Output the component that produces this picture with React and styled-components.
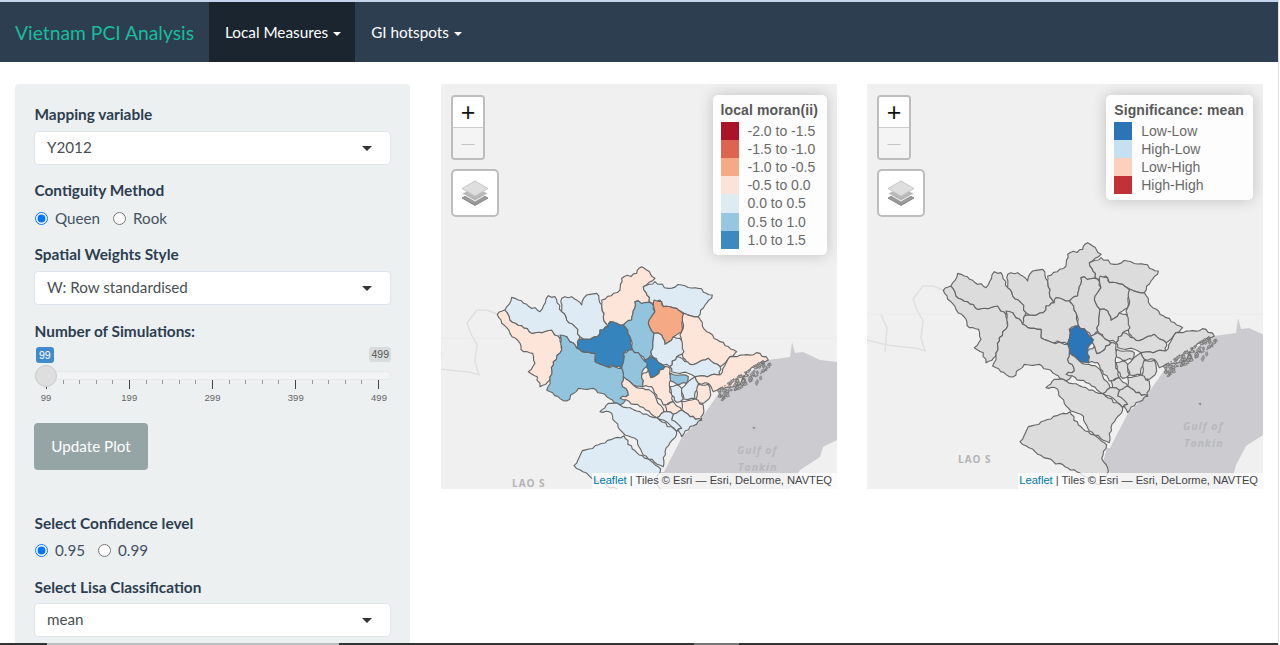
import React from "react";
import styled, { createGlobalStyle } from "styled-components";

const GlobalStyle = createGlobalStyle`
  html, body {
    margin: 0;
    padding: 0;
    background: #fff;
    overflow: hidden;
  }
  body {
    font-family: Lato, "Liberation Sans", sans-serif;
    font-size: 15.2px;
    color: #2c3e50;
  }
`;

const Page = styled.div`
  width: 1278px;
  height: 645px;
  display: flex;
  flex-direction: column;
  overflow: hidden;
  border-right: 1px solid #ddd;
`;

const TopLine = styled.div`
  height: 2px;
  flex: none;
  background: #c5d4ec;
`;

const Navbar = styled.nav`
  height: 60px;
  flex: none;
  display: flex;
  align-items: stretch;
  padding-left: 15px;
  background: #2c3e50;
`;

const Brand = styled.div`
  display: flex;
  align-items: center;
  width: 179px;
  margin-right: 15px;
  font-size: 19.3px;
  white-space: nowrap;
  color: #18bc9c;
`;

const NavItem = styled.div`
  display: flex;
  align-items: center;
  padding: 0 14px 0 16px;
  font-size: 15.3px;
  color: #fff;
  background: ${(p) => (p.$active ? "#1a252f" : "transparent")};
`;

const Caret = styled.span`
  width: 0;
  height: 0;
  margin-left: 5px;
  margin-top: 3px;
  border-top: 4px solid #fff;
  border-left: 4px solid transparent;
  border-right: 4px solid transparent;
`;

const SelectCaret = styled.span`
  width: 0;
  height: 0;
  margin-top: 2px;
  border-top: 5px solid #333;
  border-left: 5px solid transparent;
  border-right: 5px solid transparent;
`;

const Content = styled.div`
  flex: 1;
  min-height: 0;
  display: flex;
  padding-top: 22px;
  overflow: hidden;
`;

const SideCol = styled.div`
  width: 426px;
  flex: none;
  padding: 0 16px 0 15px;
  box-sizing: border-box;
`;

const Well = styled.div`
  background: #ecf0f1;
  border-radius: 4px;
  padding: 19px 19px 30px;
`;

const Label = styled.div`
  font-size: 15.4px;
  font-weight: 700;
  line-height: 22px;
  padding-left: 0.5px;
  margin-bottom: ${(p) => p.$mb ?? 6}px;
  margin-top: ${(p) => p.$mt ?? 0}px;
`;

const SelectBox = styled.div`
  height: 34px;
  box-sizing: border-box;
  display: flex;
  align-items: center;
  justify-content: space-between;
  padding: 0 18px 2px 12px;
  background: #fff;
  border: 1px solid #dce4ec;
  border-radius: 4px;
  color: #4a4f53;
`;

const RadioRow = styled.div`
  display: flex;
  align-items: center;
  height: 22px;
  color: #44525f;
`;

const RadioLabel = styled.label`
  display: flex;
  align-items: center;
  margin-right: 12px;

  input {
    width: 13px;
    height: 13px;
    margin: 0 7px 0 1px;
  }
`;

const Slider = styled.div`
  margin-top: 5px;
  font-family: "Liberation Sans", Arial, sans-serif;
`;

const BadgeRow = styled.div`
  display: flex;
  justify-content: space-between;
  padding-left: 2px;
`;

const Badge = styled.span`
  font-size: 10.5px;
  line-height: 13px;
  padding: ${(p) => (p.$blue ? "2px 3px 1px" : "1px 2px")};
  border-radius: 3px;
  align-self: flex-start;
  color: ${(p) => (p.$blue ? "#fff" : "#555")};
  background: ${(p) => (p.$blue ? "#428bca" : "#d9dcdd")};
`;

const TrackWrap = styled.div`
  position: relative;
  margin-top: 8px;
  height: 9px;
  background: #f1f3f4;
  border: 1px solid #e6e9ea;
  box-sizing: border-box;
  border-radius: 5px;
`;

const Handle = styled.div`
  position: absolute;
  left: 0;
  top: -7px;
  width: 22px;
  height: 22px;
  box-sizing: border-box;
  border-radius: 50%;
  background: #dedede;
  border: 1px solid #c8cacb;
`;

const TickRow = styled.div`
  display: flex;
  justify-content: space-between;
  align-items: flex-start;
  height: 9px;
  padding: 0 12px;
`;

const Tick = styled.span`
  width: 1px;
  height: ${(p) => (p.$major ? 9 : 4)}px;
  background: ${(p) => (p.$major ? "#444" : "#999")};
`;

const TickLabels = styled.div`
  display: flex;
  justify-content: space-between;
  padding: 0 12px;
  margin-top: 3px;
`;

const TickLabel = styled.span`
  width: 0;
  display: flex;
  justify-content: center;
  font-size: 9.5px;
  line-height: 12px;
  color: #666;
`;

const UpdateButton = styled.div`
  width: 114px;
  height: 47px;
  margin-top: 19px;
  padding-bottom: 2px;
  box-sizing: border-box;
  display: flex;
  align-items: center;
  justify-content: center;
  border-radius: 4px;
  background: #95a5a6;
  color: #fff;
`;

const MainCol = styled.div`
  flex: 1;
  display: grid;
  grid-template-columns: 396px 396px;
  column-gap: 30px;
  padding-left: 15px;
  align-items: start;
`;

const MapPanel = styled.div`
  position: relative;
  height: 405px;
  overflow: hidden;
  background: #f0f0f0;
  font-family: "Liberation Sans", Arial, sans-serif;
`;

const MapSvg = styled.svg`
  display: block;
  width: 396px;
  height: 405px;
`;

const ZoomControl = styled.div`
  position: absolute;
  left: 10px;
  top: 11px;
  width: 34px;
  box-sizing: border-box;
  border: 2px solid #bdbdbd;
  border-radius: 4px;
  overflow: hidden;
`;

const ZoomButton = styled.div`
  height: 30px;
  display: flex;
  align-items: center;
  justify-content: center;
  background: ${(p) => (p.$disabled ? "#f4f4f4" : "#fff")};
  color: ${(p) => (p.$disabled ? "#c4c4c4" : "#111")};
  border-bottom: ${(p) => (p.$disabled ? "none" : "1px solid #ccc")};
  font: 400 ${(p) => (p.$disabled ? 13 : 25)}px "Liberation Sans", Arial, sans-serif;
`;

const LayersControl = styled.div`
  position: absolute;
  left: 10px;
  top: 85px;
  width: 48px;
  height: 48px;
  box-sizing: border-box;
  display: flex;
  align-items: center;
  justify-content: center;
  background: #fff;
  border: 2px solid #bdbdbd;
  border-radius: 5px;
`;

const Legend = styled.div`
  position: absolute;
  top: 11px;
  right: 10px;
  padding: 6px 9px 6px 8px;
  border-radius: 5px;
  background: rgba(255, 255, 255, 0.85);
  box-shadow: 0 0 15px rgba(0, 0, 0, 0.2);
  font-size: 14px;
  line-height: 18.2px;
  color: #6a6a6a;
`;

const LegendTitle = styled.div`
  font-weight: 700;
  letter-spacing: 0.12px;
  color: #585858;
  white-space: nowrap;
  margin-bottom: 2.4px;
`;

const LegendRow = styled.div`
  display: flex;
  white-space: nowrap;
`;

const Swatch = styled.i`
  width: 18px;
  height: 18.2px;
  margin-right: 9px;
  background: ${(p) => p.$color};
`;

const Attribution = styled.div`
  position: absolute;
  right: 0;
  bottom: 0;
  height: 16px;
  padding: 0 5px 0 1px;
  background: rgba(255, 255, 255, 0.75);
  font-size: 11.15px;
  line-height: 15px;
  color: #444;
  white-space: nowrap;

  a {
    color: #0078a8;
  }
`;

const TaskbarEdge = styled.div`
  height: 2px;
  flex: none;
  background: linear-gradient(
    to right,
    #333 0 47px,
    #bbb 47px 339px,
    #333 339px 694px,
    #777 694px 739px,
    #333 739px
  );
`;

const LO = "#fde5da";
const LB = "#deebf4";
const MB = "#92c4de";
const DB = "#3684bd";
const OR = "#f6a985";

// points are read from the screenshot at 3x, the svg group scales them back
const regions = [
  { fill: LO, pts: "112,178 135,165 150,195 185,212 215,235 275,225 300,250 305,285 280,320 270,375 240,395 232,365 205,350 225,325 218,295 190,290 175,258 150,235 125,205" },
  { fill: LB, pts: "135,165 155,127 175,135 200,148 240,170 265,122 285,125 305,170 320,195 345,215 360,245 350,280 320,245 300,250 275,225 215,235 185,212 150,195" },
  { fill: LB, pts: "305,130 335,125 365,150 380,120 410,115 425,150 430,185 445,215 420,225 412,245 370,252 360,245 345,215 320,195 305,170" },
  { fill: LO, pts: "425,135 480,105 485,70 530,55 545,35 560,45 585,70 550,95 575,145 525,140 515,195 490,210 470,205 445,215 430,185 425,150" },
  { fill: LB, pts: "550,95 585,80 625,100 665,90 715,100 757,120 735,150 715,185 672,175 650,160 610,155 600,135 575,145" },
  { fill: DB, pts: "355,255 370,252 412,245 420,225 445,215 450,200 470,205 490,210 510,245 518,280 490,295 485,340 455,330 440,335 405,320 405,295 365,290 350,280" },
  { fill: MB, pts: "490,210 515,195 525,140 575,145 585,170 565,205 582,235 575,300 555,315 540,300 518,285 510,245" },
  { fill: OR, pts: "582,135 605,140 610,155 650,160 672,180 665,230 640,245 615,268 605,240 582,235 565,205 585,170" },
  { fill: LO, pts: "672,175 715,185 740,230 780,260 830,290 810,305 780,335 745,310 690,328 660,290 660,240 665,230" },
  { fill: LB, pts: "582,235 605,240 615,268 640,245 660,250 672,290 650,305 630,335 600,325 575,300" },
  { fill: DB, pts: "555,315 575,305 615,335 590,360 572,368 565,345" },
  { fill: MB, mark: true, pts: "490,295 518,285 540,300 562,325 545,360 548,395 520,390 490,365 485,340" },
  { fill: MB, pts: "300,240 320,245 350,280 365,290 405,295 405,320 440,335 485,340 490,365 485,385 505,420 480,450 440,425 400,400 355,400 320,438 260,405 270,375 280,320 305,285" },
  { fill: LO, pts: "485,385 490,365 520,390 548,400 575,410 590,435 612,470 590,488 540,455 480,430 505,420" },
  { fill: LO, pts: "545,360 565,345 572,368 590,360 615,335 630,340 632,375 628,390 640,440 610,450 590,420 575,395 548,395" },
  { fill: LB, pts: "630,335 650,305 690,328 745,310 780,335 780,360 705,365 685,355 660,355 635,350" },
  { fill: LO, pts: "705,365 780,360 810,305 850,300 900,295 925,315 890,330 860,350 840,390 780,400 760,410 745,385 715,385" },
  { fill: MB, pts: "632,355 660,360 685,365 680,385 650,388 632,378" },
  { fill: LB, pts: "630,395 650,390 665,400 670,432 650,442 635,420" },
  { fill: LB, pts: "680,385 705,365 715,385 710,405 705,430 672,432 665,400" },
  { fill: LO, pts: "715,388 745,388 752,420 730,445 705,440 710,405" },
  { fill: LO, pts: "615,450 640,440 665,465 640,478 620,470" },
  { fill: LO, pts: "665,440 705,432 730,450 725,495 690,485 665,465" },
  { fill: LB, pts: "640,478 665,465 690,485 725,495 690,515 665,545 650,510 635,495" },
  { fill: LB, pts: "590,488 612,470 620,470 640,478 635,495 665,520 650,530 610,495" },
  { fill: LB, pts: "420,470 445,445 480,450 540,470 590,488 650,530 645,548 615,590 610,635 550,600 525,550 495,540 465,500 455,475" },
  { fill: LB, pts: "342,632 367,587 387,582 472,547 492,542 517,582 547,602 602,642 587,682 607,722 582,762 512,722 442,692 387,662" },
];

const noise = (a, b) => {
  const s = Math.sin(a * 12.9898 + b * 78.233) * 43758.5453;
  return s - Math.floor(s);
};

// borders are jagged in the picture, so wobble each edge the same way for both neighbours
const roughen = (pts) => {
  const p = pts.split(" ").map((s) => s.split(",").map(Number));
  const out = [];
  p.forEach((a, i) => {
    const b = p[(i + 1) % p.length];
    const rev = a[0] > b[0] || (a[0] === b[0] && a[1] > b[1]);
    const [s, e] = rev ? [b, a] : [a, b];
    const len = Math.hypot(e[0] - s[0], e[1] - s[1]);
    const n = Math.max(1, Math.round(len / 10));
    const seg = [];
    for (let k = 1; k < n; k++) {
      const t = k / n;
      const off = (noise(s[0] + k, s[1] + e[0] * 0.1 + e[1] * 0.01) - 0.5) * 8;
      seg.push([
        s[0] + (e[0] - s[0]) * t - ((e[1] - s[1]) / len) * off,
        s[1] + (e[1] - s[1]) * t + ((e[0] - s[0]) / len) * off,
      ]);
    }
    if (rev) seg.reverse();
    out.push(a, ...seg);
  });
  return out.map(([x, y]) => `${x.toFixed(1)},${y.toFixed(1)}`).join(" ");
};

// the broken up coast and small islands in the north east
const islands = Array.from({ length: 120 }, (_, i) => {
  const t = noise(i, 3);
  const spread = noise(i, 7) - 0.3;
  const x = 768 + t * 150 + spread * 16;
  const y = 418 - t * 100 + spread * 28;
  const r = 2 + noise(i, 11) * 5;
  return `${x},${y} ${x + r},${y - r * 0.8} ${x + r * 1.5},${y + r * 0.3} ${x + r * 0.3},${y + r * 0.7}`;
});

const strayIslands = [
  "885,385 892,372 896,380 890,392",
  "898,366 904,362 906,372 900,376",
  "878,518 884,516 884,522",
  "915,345 920,342 921,348",
  "870,372 876,366 878,376",
];

const GeoMap = ({ dx = 0, dy = 0, gray }) => (
  <MapSvg viewBox="0 0 396 405">
    <g transform={`translate(${dx} ${dy})`}>
      <polygon
        fill="#cbcbd0"
        points="327,276 349,273 351,258 354,269 362,268 379,276 396,278 396,356 382,363 379,373 359,386 349,405 340,440 229,440 223,412 216,402 220,388 223,388 241,353 259,336 279,308"
      />
      <line x1="-30" y1="254" x2="430" y2="254" stroke="#ebebeb" />
      <polyline fill="none" stroke="#e0e0e0" strokeWidth="1.5" points="56,230 46,226 36,226 26,239 30,250 36,261 34,278 38,291 28,288 16,287 0,285 -20,280" />
      <polyline fill="none" stroke="#e0e0e0" strokeWidth="1.5" points="-6,255 0,268 -2,292" />
      <text x="71" y="403" fill="#b4b4b4" fontFamily="Open Sans, sans-serif" fontWeight="700" fontSize="10" letterSpacing="1">LAO S</text>
      <text x="296" y="370" fill="#b8b8bc" fontFamily="Open Sans, sans-serif" fontStyle="italic" fontWeight="700" fontSize="10.5" letterSpacing="1">Gulf of</text>
      <text x="297" y="387" fill="#b8b8bc" fontFamily="Open Sans, sans-serif" fontStyle="italic" fontWeight="700" fontSize="10.5" letterSpacing="1">Tonkin</text>
      <g transform="translate(19 171) scale(0.33333)">
        {regions.map((r, i) => (
          <polygon
            key={i}
            points={roughen(r.pts)}
            fill={gray ? (r.mark ? "#2a76b8" : "#dcdcdc") : r.fill}
            stroke="#666"
            strokeWidth="3.4"
            strokeLinejoin="round"
          />
        ))}
        {islands.map((pts, i) => (
          <polygon key={i} points={pts} fill="#b4b4b4" stroke="#666" strokeWidth="1.8" />
        ))}
        {strayIslands.map((pts, i) => (
          <polygon key={i} points={pts} fill="#999" stroke="#777" strokeWidth="1.4" />
        ))}
      </g>
    </g>
  </MapSvg>
);

const LayersIcon = () => (
  <svg width="28" height="27" viewBox="0 0 28 27">
    <path d="M14 11 L27 18 L14 25.5 L1 18 Z" fill="#9a9a9a" stroke="#8a8a8a" />
    <path d="M14 6.5 L27 13.5 L14 21 L1 13.5 Z" fill="#b8b8b8" stroke="#f4f4f4" />
    <path d="M14 1 L27 8.5 L14 16 L1 8.5 Z" fill="#dedede" stroke="#c8c8c8" />
  </svg>
);

const MapFrame = ({ legendTitle, legendItems, ...geo }) => (
  <MapPanel>
    <GeoMap {...geo} />
    <ZoomControl>
      <ZoomButton>+</ZoomButton>
      <ZoomButton $disabled>—</ZoomButton>
    </ZoomControl>
    <LayersControl>
      <LayersIcon />
    </LayersControl>
    <Legend>
      <LegendTitle>{legendTitle}</LegendTitle>
      {legendItems.map(([color, text]) => (
        <LegendRow key={text}>
          <Swatch $color={color} />
          {text}
        </LegendRow>
      ))}
    </Legend>
    <Attribution>
      <a>Leaflet</a> | Tiles © Esri — Esri, DeLorme, NAVTEQ
    </Attribution>
  </MapPanel>
);

const moranLegend = [
  ["#ab1428", "-2.0 to -1.5"],
  ["#dd6450", "-1.5 to -1.0"],
  ["#f6a986", "-1.0 to -0.5"],
  ["#fbe3d9", "-0.5 to 0.0"],
  ["#deebf3", "0.0 to 0.5"],
  ["#97c7e0", "0.5 to 1.0"],
  ["#3c89c0", "1.0 to 1.5"],
];

const lisaLegend = [
  ["#2b74b5", "Low-Low"],
  ["#c6e0ef", "High-Low"],
  ["#fcd0bc", "Low-High"],
  ["#c13238", "High-High"],
];

const Radios = ({ name, options }) => (
  <RadioRow>
    {options.map((opt, i) => (
      <RadioLabel key={opt}>
        <input type="radio" name={name} defaultChecked={i === 0} />
        {opt}
      </RadioLabel>
    ))}
  </RadioRow>
);

const Select = ({ value }) => (
  <SelectBox>
    {value}
    <SelectCaret />
  </SelectBox>
);

const App = () => {
  return (
    <Page>
      <GlobalStyle />
      <TopLine />
      <Navbar>
        <Brand>Vietnam PCI Analysis</Brand>
        <NavItem $active>
          Local Measures
          <Caret />
        </NavItem>
        <NavItem>
          GI hotspots
          <Caret />
        </NavItem>
      </Navbar>
      <Content>
        <SideCol>
          <Well>
            <Label>Mapping variable</Label>
            <Select value="Y2012" />
            <Label $mt={14} $mb={6}>Contiguity Method</Label>
            <Radios name="contiguity" options={["Queen", "Rook"]} />
            <Label $mt={14} $mb={6}>Spatial Weights Style</Label>
            <Select value="W: Row standardised" />
            <Label $mt={15} $mb={0}>Number of Simulations:</Label>
            <Slider>
              <BadgeRow>
                <Badge $blue>99</Badge>
                <Badge>499</Badge>
              </BadgeRow>
              <TrackWrap>
                <Handle />
              </TrackWrap>
              <TickRow>
                {Array.from({ length: 21 }, (_, i) => (
                  <Tick key={i} $major={i % 5 === 0} />
                ))}
              </TickRow>
              <TickLabels>
                {[99, 199, 299, 399, 499].map((n) => (
                  <TickLabel key={n}>{n}</TickLabel>
                ))}
              </TickLabels>
            </Slider>
            <UpdateButton>Update Plot</UpdateButton>
            <Label $mt={42} $mb={5}>Select Confidence level</Label>
            <Radios name="confidence" options={["0.95", "0.99"]} />
            <Label $mt={15} $mb={5}>Select Lisa Classification</Label>
            <Select value="mean" />
          </Well>
        </SideCol>
        <MainCol>
          <MapFrame legendTitle="local moran(ii)" legendItems={moranLegend} />
          <MapFrame legendTitle="Significance: mean" legendItems={lisaLegend} dx={20} dy={-24} gray />
        </MainCol>
      </Content>
      <TaskbarEdge />
    </Page>
  );
};

export default App;
